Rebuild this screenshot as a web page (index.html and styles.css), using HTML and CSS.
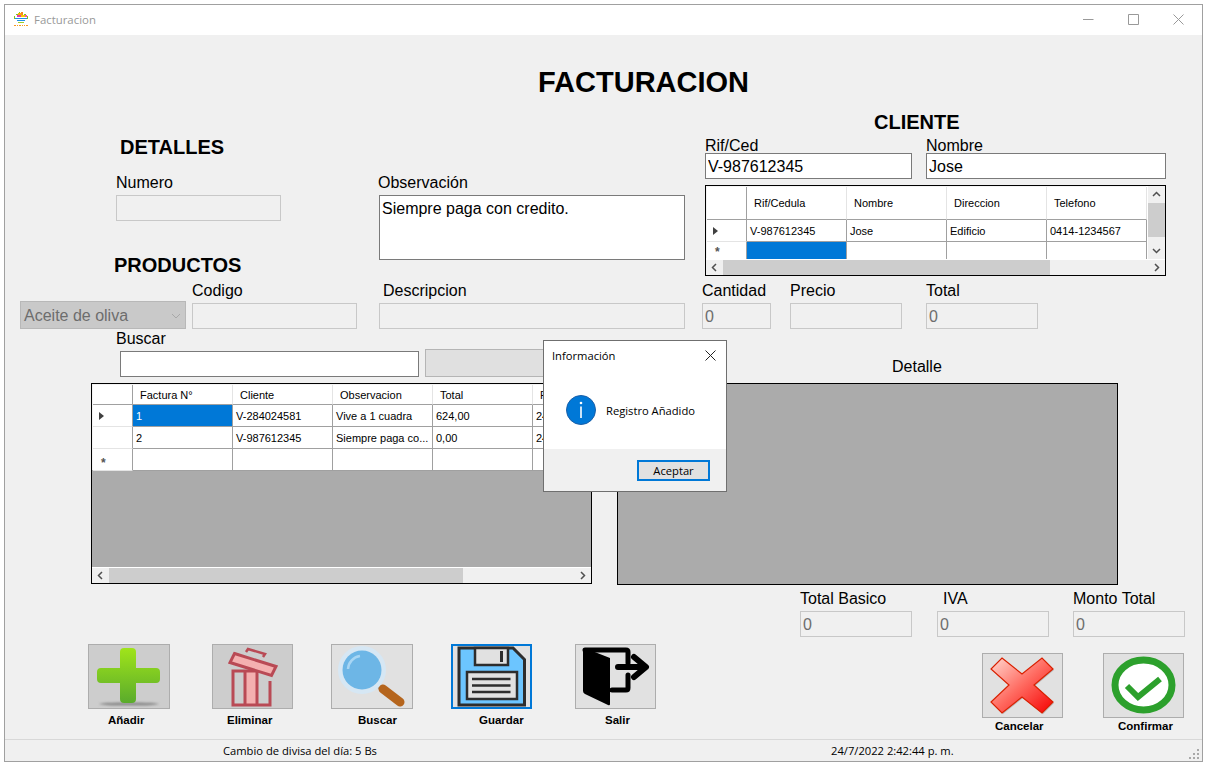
FILE: index.html
```html
<!DOCTYPE html>
<html lang="es">
<head>
<meta charset="utf-8">
<title>Facturacion</title>
<link rel="stylesheet" href="styles.css">
</head>
<body>
<div class="window">
  <header class="titlebar">
    <svg class="favicon" width="16" height="16" viewBox="0 0 16 16">
      <path d="M6 1h1v1H6zM3 3h2v1H3zM11 3h2v1h-2zM1 5h1v3H1zM14 5h1v3h-1z" fill="#7fc31c"/>
      <path d="M5 2h3v2H5z" fill="#f7b500"/><path d="M8 1h2v3H8z" fill="#f58a1f"/>
      <path d="M4 4h4v2H4z" fill="#e23ca6"/><path d="M8 4h4v2H8z" fill="#f7c900"/><path d="M12 4h2v2h-2z" fill="#f04fb0"/>
      <path d="M2 7h12v1H2z" fill="#1e90e8"/><path d="M4 9h8v1H4z" fill="#1e90e8"/><path d="M5 11h6v1H5z" fill="#9ccf2a"/>
      <path d="M1 14h2v1H1zM4 14h1v1H4zM6 14h2v1H6zM9 14h1v1H9zM11 14h1v1h-1zM13 14h2v1h-2z" fill="#f79a1e"/>
    </svg>
    <span class="title-text">Facturacion</span>
    <div class="controls">
      <span class="ctl"><svg width="11" height="11" viewBox="0 0 11 11"><path d="M0 5.5h10.5" stroke="#999" fill="none"/></svg></span>
      <span class="ctl"><svg width="11" height="11" viewBox="0 0 11 11"><path d="M.5.5h10v10H.5z" stroke="#999" fill="none"/></svg></span>
      <span class="ctl"><svg width="11" height="11" viewBox="0 0 11 11"><path d="M.5.5l10 10M10.5.5l-10 10" stroke="#999" fill="none"/></svg></span>
    </div>
  </header>

  <main class="canvas">
    <h1 class="page-title">FACTURACION</h1>

    <section class="row row-top">
      <div class="col-left">
        <h2 class="heading heading-det">DETALLES</h2>
        <div class="field f-numero">
          <label class="lbl">Numero</label>
          <input class="inp off w165" disabled>
        </div>
        <h2 class="heading heading-prod">PRODUCTOS</h2>
      </div>
      <div class="col-obs">
        <label class="lbl">Observación</label>
        <textarea class="inp obs-text">Siempre paga con credito.</textarea>
      </div>
      <div class="col-client">
        <h2 class="heading heading-cli">CLIENTE</h2>
        <div class="client-fields">
          <div class="field f-tight f-rif">
            <label class="lbl">Rif/Ced</label>
            <input class="inp w207" value="V-987612345">
          </div>
          <div class="field f-tight f-nom">
            <label class="lbl">Nombre</label>
            <input class="inp w240" value="Jose">
          </div>
        </div>
        <div class="grid grid-client">
          <div class="grid-main">
            <div class="view">
              <table class="tbl">
                <colgroup><col class="c-rh"><col class="c"><col class="c"><col class="c"><col class="c"></colgroup>
                <tr class="hd hd-tall"><th class="rh"></th><th>Rif/Cedula</th><th>Nombre</th><th>Direccion</th><th>Telefono</th></tr>
                <tr><td class="rh"><span class="arrow"></span></td><td>V-987612345</td><td>Jose</td><td>Edificio</td><td>0414-1234567</td></tr>
                <tr class="tr-clip"><td class="rh star">*</td><td class="sel"></td><td></td><td></td><td></td></tr>
              </table>
            </div>
            <div class="vscroll">
              <svg class="chev" width="17" height="17" viewBox="0 0 17 17"><path d="M5 10l3.5-3.5L12 10" fill="none" stroke="#505050" stroke-width="1.5"/></svg>
              <div class="vthumb"></div>
              <svg class="chev" width="17" height="17" viewBox="0 0 17 17"><path d="M5 7l3.5 3.5L12 7" fill="none" stroke="#505050" stroke-width="1.5"/></svg>
            </div>
          </div>
          <div class="hscroll">
            <svg class="chev" width="17" height="15" viewBox="0 0 17 15"><path d="M10 4l-3.5 3.5L10 11" fill="none" stroke="#505050" stroke-width="1.5"/></svg>
            <div class="thumb thumb-client"></div>
            <div class="track"></div>
            <svg class="chev" width="17" height="15" viewBox="0 0 17 15"><path d="M7 4l3.5 3.5L7 11" fill="none" stroke="#505050" stroke-width="1.5"/></svg>
          </div>
        </div>
      </div>
    </section>

    <section class="row row-prod">
      <div class="combo"><span>Aceite de oliva</span>
        <svg width="10" height="6" viewBox="0 0 10 6"><path d="M1 1l4 4 4-4" fill="none" stroke="#a8a8a8"/></svg>
      </div>
      <div class="field ml6"><label class="lbl">Codigo</label><input class="inp off w165" disabled></div>
      <div class="field ml22"><label class="lbl pl4">Descripcion</label><input class="inp off w306" disabled></div>
      <div class="field ml17"><label class="lbl">Cantidad</label><input class="inp off w69" value="0" disabled></div>
      <div class="field ml19"><label class="lbl">Precio</label><input class="inp off w112" disabled></div>
      <div class="field ml24"><label class="lbl">Total</label><input class="inp off w112" value="0" disabled></div>
    </section>

    <section class="row row-search">
      <div class="field f-buscar"><label class="lbl">Buscar</label><input class="inp w299"></div>
      <div class="search-btn"></div>
      <div class="lbl detalle-lbl">Detalle</div>
    </section>

    <section class="row row-grids">
      <div class="grid grid-fact">
        <div class="view">
          <table class="tbl">
            <colgroup><col class="c-rh"><col class="c"><col class="c"><col class="c"><col class="c"><col class="c"></colgroup>
            <tr class="hd"><th class="rh"></th><th>Factura N°</th><th>Cliente</th><th>Observacion</th><th>Total</th><th>Fecha</th></tr>
            <tr><td class="rh"><span class="arrow"></span></td><td class="sel">1</td><td>V-284024581</td><td>Vive a 1 cuadra</td><td>624,00</td><td>24/7/2022</td></tr>
            <tr><td class="rh"></td><td>2</td><td>V-987612345</td><td>Siempre paga co...</td><td>0,00</td><td>24/7/2022</td></tr>
            <tr><td class="rh star">*</td><td></td><td></td><td></td><td></td><td></td></tr>
          </table>
        </div>
        <div class="hscroll">
          <svg class="chev" width="17" height="15" viewBox="0 0 17 15"><path d="M10 4l-3.5 3.5L10 11" fill="none" stroke="#505050" stroke-width="1.5"/></svg>
          <div class="thumb thumb-fact"></div>
          <div class="track"></div>
          <svg class="chev" width="17" height="15" viewBox="0 0 17 15"><path d="M7 4l3.5 3.5L7 11" fill="none" stroke="#505050" stroke-width="1.5"/></svg>
        </div>
      </div>
      <div class="grid grid-detail"></div>
    </section>

    <section class="row row-totals">
      <div class="field"><label class="lbl">Total Basico</label><input class="inp off w112" value="0" disabled></div>
      <div class="field ml25"><label class="lbl pl6">IVA</label><input class="inp off w112" value="0" disabled></div>
      <div class="field ml24"><label class="lbl">Monto Total</label><input class="inp off w112" value="0" disabled></div>
    </section>

    <section class="row row-actions">
      <div class="action a-add">
        <div class="tile dark">
          <svg width="80" height="63" viewBox="1 1 80 63">
            <defs>
              <linearGradient id="gp" x1="0" y1="0" x2="0" y2="1"><stop offset="0" stop-color="#a0e41a"/><stop offset="1" stop-color="#5aab2c"/></linearGradient>
              <filter id="bl" x="-20%" y="-200%" width="140%" height="500%"><feGaussianBlur stdDeviation="1"/></filter>
            </defs>
            <ellipse cx="41" cy="60" rx="30" ry="1.6" fill="#8a8a8a" filter="url(#bl)"/>
            <path d="M36 4h8q4 0 4 4v16h20q4 0 4 4v7q0 4-4 4H48v16q0 4-4 4h-8q-4 0-4-4V39H13q-4 0-4-4v-7q0-4 4-4h19V8q0-4 4-4z" fill="url(#gp)"/>
          </svg>
        </div>
        <span class="act-lbl">Añadir</span>
      </div>
      <div class="action a-del">
        <div class="tile dark">
          <svg width="79" height="63" viewBox="1 1 79 63">
            <path d="M32 27h13v34H32z" fill="#f4b0b0"/>
            <path d="M46 27H21v34h37V37M33 27v34M45 27v34" fill="none" stroke="#b94a55" stroke-width="3"/>
            <path d="M22.500 9.500L64 22.500 59.500 31.500 18 18.500z" fill="#f4b0b0" stroke="#b94a55" stroke-width="3"/>
            <path d="M34 8l2-3 17 5-2 3" fill="none" stroke="#b94a55" stroke-width="2.500"/>
          </svg>
        </div>
        <span class="act-lbl">Eliminar</span>
      </div>
      <div class="action a-find">
        <div class="tile">
          <svg width="80" height="63" viewBox="1 1 80 63">
            <path d="M46 41l5 4" stroke="#9a9a9a" stroke-width="4"/>
            <path d="M52 45l17 13" stroke="#b5651d" stroke-width="9" stroke-linecap="round"/>
            <circle cx="31" cy="26" r="24" fill="#d6e7f4"/>
            <circle cx="31" cy="26" r="19.500" fill="#6db6e6"/>
            <path d="M17 25a14 14 0 0 1 12-13" fill="none" stroke="#a8d6f4" stroke-width="2.500"/>
          </svg>
        </div>
        <span class="act-lbl">Buscar</span>
      </div>
      <div class="action a-save">
        <div class="tile focus">
          <svg width="77" height="61" viewBox="2 2 77 61">
            <path d="M8 4h54l11.500 11.500V61H8z" fill="#6cc5ff" stroke="#2d2d2d" stroke-width="3"/>
            <path d="M24 4h33v17H24z" fill="#e1e1e1" stroke="#2d2d2d" stroke-width="2.500"/>
            <path d="M50.500 7v11" stroke="#2d2d2d" stroke-width="3"/>
            <path d="M16 28h50v27H16z" fill="#e1e1e1" stroke="#2d2d2d" stroke-width="2.500"/>
            <path d="M21 35h38.500M21 41.500h38.500M21 48h38.500" stroke="#2d2d2d" stroke-width="2.500"/>
          </svg>
        </div>
        <span class="act-lbl">Guardar</span>
      </div>
      <div class="action a-exit">
        <div class="tile">
          <svg width="79" height="63" viewBox="1 1 79 63">
            <path d="M9.500 4L35 14v46q0 2-2 1L10 50q-2-1-2-3V5z" fill="#000"/>
            <path d="M10 6h41q2 0 2 2v11M53 31v13q0 2-2 2H37" fill="none" stroke="#000" stroke-width="5" stroke-linecap="round"/>
            <path d="M43 23h24M59 13l12 10-12 10" fill="none" stroke="#000" stroke-width="6" stroke-linecap="round" stroke-linejoin="round"/>
          </svg>
        </div>
        <span class="act-lbl">Salir</span>
      </div>
      <div class="action a-cancel">
        <div class="tile">
          <svg width="79" height="63" viewBox="1 1 79 63">
            <defs>
              <linearGradient id="gx" x1="0" y1="0" x2="1" y2="1"><stop offset="0" stop-color="#ffd8d0"/><stop offset=".5" stop-color="#ff6a60"/><stop offset="1" stop-color="#f50000"/></linearGradient>
            </defs>
            <path d="M21 6L41 22 61 6 72 17 53 33 72 50 61 61 41 45 21 61 10 50 28 33 10 17z" fill="#9a9a9a" opacity=".6"/>
            <path d="M20 5L40 21 60 5 71 16 52 32 71 49 60 60 40 44 20 60 9 49 27 32 9 16z" fill="url(#gx)" stroke="#d92000" stroke-width="1.200"/>
          </svg>
        </div>
        <span class="act-lbl">Cancelar</span>
      </div>
      <div class="action a-ok">
        <div class="tile">
          <svg width="79" height="63" viewBox="1 1 79 63">
            <ellipse cx="40.500" cy="32" rx="28.500" ry="25" fill="#fff" stroke="#2ca02c" stroke-width="7"/>
            <path d="M24 33l11 11 22-18" fill="none" stroke="#2ca02c" stroke-width="6"/>
          </svg>
        </div>
        <span class="act-lbl">Confirmar</span>
      </div>
    </section>
  </main>

  <footer class="statusbar">
    <span class="st-a">Cambio de divisa del día: 5 Bs</span>
    <span class="st-b">24/7/2022 2:42:44 p. m.</span>
    <svg class="grip" width="11" height="11" viewBox="0 0 11 11">
      <path d="M8 0h2v2H8zM4 4h2v2H4zM8 4h2v2H8zM0 8h2v2H0zM4 8h2v2H4zM8 8h2v2H8z" fill="#a8a8a8"/>
    </svg>
  </footer>

  <div class="dialog">
    <div class="dlg-body">
      <div class="dlg-head">
        <span class="dlg-title">Información</span>
        <svg width="11" height="11" viewBox="0 0 11 11"><path d="M.5.5l10 10M10.500.5l-10 10" stroke="#222" fill="none"/></svg>
      </div>
      <div class="dlg-msg">
        <svg width="30" height="30" viewBox="0 0 30 30">
          <circle cx="15" cy="15" r="14.500" fill="#0078d7" stroke="#1a5fa8"/>
          <circle cx="15" cy="8" r="1.300" fill="#fff"/>
          <path d="M14.200 11.500h1.600V23h-1.600z" fill="#fff"/>
        </svg>
        <span>Registro Añadido</span>
      </div>
    </div>
    <div class="dlg-foot"><div class="dlg-btn">Aceptar</div></div>
  </div>
</div>
</body>
</html>
```

FILE: styles.css
```css
* { box-sizing: border-box; }
html, body { margin: 0; padding: 0; background: #fff; }
body { padding: 4px 0 0 4px; height: 769px; overflow: hidden; font-family: "Liberation Sans", Arial, sans-serif; color: #000; }

.window { position: relative; width: 1199px; height: 758px; border: 1px solid #a0a0a0; background: #f0f0f0; display: flex; flex-direction: column; }

/* title bar */
.titlebar { height: 30px; background: #fff; display: flex; align-items: center; flex: none; padding-left: 8px; }
.favicon { flex: none; margin-top: -3px; }
.title-text { font: 11.4px "Open Sans", sans-serif; color: #999; margin-left: 5px; margin-top: -2px; }
.controls { margin-left: auto; display: flex; padding-right: 1px; }
.ctl { width: 45px; height: 30px; display: flex; align-items: center; justify-content: center; }
.ctl svg { margin-top: -2px; }

/* canvas */
.canvas { height: 704px; flex: none; }
.page-title { margin: 0; padding: 32px 0 0 80px; font-size: 29px; line-height: 30px; font-weight: 700; text-align: center; }
.row { display: flex; }

.heading { margin: 0; font-size: 20px; line-height: 24px; font-weight: 700; }
.lbl { display: block; font-size: 16px; line-height: 16px; height: 16px; white-space: nowrap; }
.field { display: flex; flex-direction: column; }
.field .lbl { margin-bottom: 4px; }
.field.f-tight .lbl { margin-bottom: -1px; }

.inp { display: block; height: 26px; margin: 0; padding: 2px 2px 0; border: 1px solid #7a7a7a; border-radius: 0; background: #fff; font: 16px "Liberation Sans", Arial, sans-serif; color: #000; outline: none; }
.inp.off { background: #f0f0f0; border-color: #c8c8c8; color: #6d6d6d; }
.w69 { width: 69px; } .w112 { width: 112px; } .w165 { width: 165px; } .w207 { width: 207px; }
.w240 { width: 240px; } .w299 { width: 299px; } .w306 { width: 306px; }
.ml6 { margin-left: 6px; } .ml17 { margin-left: 17px; } .ml19 { margin-left: 19px; } .ml22 { margin-left: 22px; } .ml24 { margin-left: 24px; } .ml25 { margin-left: 25px; }
.pl4 { padding-left: 4px; } .pl6 { padding-left: 6px; }

/* top row */
.row-top { height: 180px; padding-left: 109px; }
.col-left { width: 264px; }
.heading-det { margin-top: 38px; padding-left: 6px; }
.f-numero { margin-top: 16px; padding-left: 2px; }
.heading-prod { margin-top: 32px; }
.col-obs { width: 327px; padding-top: 78px; }
.col-obs .lbl { margin-bottom: 4px; }
.obs-text { width: 306px; height: 65px; margin-left: 1px; padding: 4px 2px 1px; resize: none; overflow: hidden; line-height: 18px; }
.col-client { width: 461px; padding-top: 13px; }
.heading-cli { padding-left: 169px; }
.client-fields { display: flex; margin-top: 4px; }
.f-nom { margin-left: 14px; }
.grid-client { margin-top: 6px; width: 461px; height: 91px; }

/* grids */
.grid { border: 1px solid #000; background: #ababab; display: flex; flex-direction: column; flex: none; }
.grid-main { display: flex; height: 73px; flex: none; }
.view { flex: 1; overflow: hidden; min-width: 0; }
.grid-fact { width: 501px; height: 201px; }
.grid-fact .view { flex: none; height: 183px; }
.grid-client .view { background: #fff; }
.grid-detail { width: 501px; height: 202px; margin-left: 25px; }
.tbl { border-collapse: separate; border-spacing: 0; table-layout: fixed; width: max-content; margin: 1px 0 0 1px; background: #fff; font-size: 11px; box-shadow: -1px -1px 0 #f4f4f4; }
.c-rh { width: 40px; }
.c { width: 100px; }
.tbl td, .tbl th { height: 22px; padding: 0 0 0 3px; border-right: 1px solid #a0a0a0; border-bottom: 1px solid #a0a0a0; font-weight: 400; text-align: left; white-space: nowrap; overflow: hidden; }
.tbl .hd th { height: 20px; padding-left: 7px; border-right-color: #e4e4e4; }
.tbl .hd-tall th { height: 33px; }
.tbl .hd .rh, .tbl .rh { padding: 0; border-right-color: #a0a0a0; }
.tbl td.rh { border-bottom-color: #e4e4e4; }
.tbl td.sel { background: #0078d7; color: #fff; }
.arrow { display: block; margin-left: 6px; width: 0; height: 0; border-left: 5px solid #404040; border-top: 4.500px solid transparent; border-bottom: 4.500px solid transparent; }
.tbl td.star { padding: 6px 0 0 8px; font-weight: 700; font-size: 12px; color: #555; line-height: 14px; }
.tbl .tr-clip td { height: 17px; border-bottom: 0; }
.tbl .tr-clip td.star { padding: 3px 0 0 8px; }

.hscroll { height: 16px; flex: none; display: flex; background: #f0f0f0; border-top: 1px solid #fff; }
.chev { flex: none; display: block; }
.thumb { background: #cdcdcd; flex: none; }
.thumb-client { width: 327px; }
.thumb-fact { width: 354px; }
.track { flex: 1; }
.vscroll { width: 17px; flex: none; background: #f0f0f0; display: flex; flex-direction: column; }
.vthumb { width: 17px; height: 34px; background: #cdcdcd; flex: none; }
.vscroll .chev:last-child { margin-top: auto; }

/* products */
.row-prod { margin-top: 6px; padding-left: 15px; }
.combo { width: 166px; height: 28px; align-self: flex-end; display: flex; align-items: center; justify-content: space-between; padding: 1px 4px 0 3px; background: #c9c9c9; border: 1px solid #b8b8b8; color: #6d6d6d; font-size: 16px; }

/* search */
.row-search { margin-top: 2px; padding-left: 111px; height: 46px; }
.f-buscar .inp { margin-left: 4px; }
.search-btn { width: 160px; height: 28px; margin-left: 6px; align-self: flex-end; background: #e0e0e0; border: 1px solid #b5b5b5; }
.detalle-lbl { align-self: flex-end; margin: 0 0 2px 32px; padding-left: 275px; width: 501px; }

.row-grids { margin-top: 6px; padding-left: 86px; height: 202px; align-items: flex-start; }
.row-totals { margin-top: 6px; padding-left: 795px; }

/* action buttons */
.row-actions { margin-top: 7px; height: 95px; }
.action { display: flex; flex-direction: column; flex: none; }
.tile { width: 100%; height: 65px; border: 1px solid #adadad; background: #e1e1e1; display: flex; align-items: center; justify-content: center; flex: none; }
.tile.dark { background: #cdcdcd; }
.tile.focus { border: 2px solid #0078d7; }
.act-lbl { font-size: 11.5px; line-height: 14px; font-weight: 700; margin-top: 4px; white-space: nowrap; }
.a-add { width: 82px; margin-left: 83px; }
.a-add .act-lbl { margin-left: 20px; }
.a-del { width: 81px; margin-left: 42px; }
.a-del .act-lbl { margin-left: 15px; }
.a-find { width: 82px; margin-left: 38px; }
.a-find .act-lbl { margin-left: 27px; }
.a-save { width: 81px; margin-left: 38px; }
.a-save .act-lbl { margin-left: 28px; }
.a-exit { width: 81px; margin-left: 43px; }
.a-exit .act-lbl { margin-left: 30px; }
.a-cancel { width: 81px; margin-left: 326px; padding-top: 9px; }
.a-cancel .act-lbl { margin: 1px 0 0 13px; }
.a-ok { width: 81px; margin-left: 40px; padding-top: 9px; }
.a-ok .act-lbl { margin: 1px 0 0 15px; }

/* status bar */
.statusbar { height: 22px; flex: none; border-top: 1px solid #d8d8d8; display: flex; align-items: center; font: 11.2px "Open Sans", sans-serif; color: #000; }
.st-a { margin-left: 218px; width: 608px; flex: none; }
.grip { margin-left: auto; margin-right: 2px; margin-top: 8px; }

/* dialog */
.dialog { position: absolute; left: 538px; top: 335px; width: 184px; height: 152px; border: 1px solid #6f6f6f; background: #f0f0f0; display: flex; flex-direction: column; font-family: "Open Sans", sans-serif; font-size: 11.2px; color: #000; }
.dlg-body { height: 108px; background: #fff; flex: none; }
.dlg-head { display: flex; align-items: center; justify-content: space-between; padding: 7px 10px 0 8px; }
.dlg-msg { display: flex; align-items: center; margin: 32px 0 0 22px; }
.dlg-msg span { margin-left: 10px; }
.dlg-foot { flex: 1; display: flex; justify-content: flex-end; padding: 11px 16px 0 0; }
.dlg-btn { width: 73px; height: 21px; border: 2px solid #0078d7; background: #e1e1e1; text-align: center; line-height: 18px; }
```
